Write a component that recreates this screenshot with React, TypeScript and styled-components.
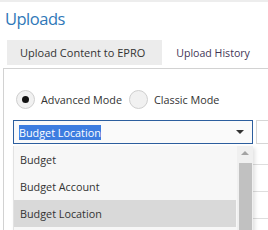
import styled, { createGlobalStyle } from 'styled-components'

const GlobalStyle = createGlobalStyle`
  html, body {
    margin: 0;
    padding: 0;
    background: #ffffff;
  }
  body {
    font-family: 'Open Sans', 'Noto Sans', sans-serif;
    color: #333333;
    overflow: hidden;
  }
`

const options = ['Budget', 'Budget Account', 'Budget Location']

const App: React.FC = () => {
  return (
    <Page>
      <GlobalStyle />
      <TopStrip />
      <Title>Uploads</Title>
      <Tabs>
        <Tab active>Upload Content to EPRO</Tab>
        <Tab visited>Upload History</Tab>
      </Tabs>
      <Panel>
        <Modes>
          <Mode>
            <Radio checked />
            <span>Advanced Mode</span>
          </Mode>
          <Mode>
            <Radio />
            <span>Classic Mode</span>
          </Mode>
        </Modes>
        <SelectRow>
          <SelectBox>
            <Selected>Budget Location</Selected>
            <Caret />
          </SelectBox>
          <SideBox />
          <Dropdown>
            <Options>
              {options.map((o) => (
                <Option key={o} active={o === 'Budget Location'}>
                  {o}
                </Option>
              ))}
            </Options>
            <Scrollbar>
              <ScrollUp />
              <Thumb />
            </Scrollbar>
          </Dropdown>
        </SelectRow>
        <BackRows>
          <BackRow />
          <BackRow />
          <BackRow />
        </BackRows>
      </Panel>
    </Page>
  )
}

const Page = styled.div`
  width: 268px;
  height: 230px;
  overflow: hidden;
`

const TopStrip = styled.div`
  height: 2px;
  background: #ededed;
`

const Title = styled.h1`
  margin: 0;
  padding: 6px 0 0 5px;
  height: 32px;
  box-sizing: border-box;
  font-size: 16.5px;
  line-height: 22px;
  letter-spacing: -0.5px;
  font-weight: 400;
  color: #2f78b8;
`

const Tabs = styled.div`
  display: flex;
  margin: 6px 0 0 7px;
  height: 25px;
`

const Tab = styled.div<{ active?: boolean; visited?: boolean }>`
  display: flex;
  align-items: center;
  padding: ${(p) => (p.active ? '0 17px 0 13px' : '0 14px')};
  font-size: ${(p) => (p.active ? '11px' : '10.6px')};
  background: ${(p) => (p.active ? '#ececec' : 'transparent')};
  color: ${(p) => (p.visited ? '#3f3555' : '#333333')};
  white-space: nowrap;
`

const Panel = styled.div`
  position: relative;
  margin: 3px 0 0 3px;
  border-top: 1px solid #d2d2d2;
  border-left: 1px solid #d2d2d2;
  padding: 20px 0 0 9px;
  height: 200px;
`

const Modes = styled.div`
  display: flex;
  align-items: center;
  height: 20px;
  gap: 7px;
  margin-left: 3px;
`

const Mode = styled.label`
  display: flex;
  align-items: center;
  gap: 6px;
  font-size: 10.8px;
  color: #333333;
  white-space: nowrap;
`

const Radio = styled.span<{ checked?: boolean }>`
  position: relative;
  width: 19px;
  height: 19px;
  box-sizing: border-box;
  border-radius: 50%;
  border: 1px solid #cfcfcf;
  background: #f1f1f1;

  &::after {
    content: '';
    display: ${(p) => (p.checked ? 'block' : 'none')};
    position: absolute;
    left: 5px;
    top: 5px;
    width: 7px;
    height: 7px;
    border-radius: 50%;
    background: #111111;
  }
`

const SelectRow = styled.div`
  position: relative;
  display: flex;
  margin-top: 11px;
  gap: 3px;
`

const SelectBox = styled.div`
  display: flex;
  align-items: center;
  justify-content: space-between;
  width: 240px;
  height: 24px;
  box-sizing: border-box;
  border: 1px solid #2c5e9e;
  background: #fafafa;
  padding: 0 8px 0 5px;
`

const Selected = styled.span`
  font-size: 10.8px;
  line-height: 15px;
  background: #3d7de0;
  color: #ffffff;
`

const Caret = styled.span`
  width: 0;
  height: 0;
  border-left: 4px solid transparent;
  border-right: 4px solid transparent;
  border-top: 4px solid #333333;
`

const SideBox = styled.div`
  flex: 1;
  height: 24px;
  box-sizing: border-box;
  border: 1px solid #d6d6d6;
  border-right: none;
`

const Dropdown = styled.div`
  position: absolute;
  left: 0;
  top: 26px;
  width: 240px;
  height: 90px;
  display: flex;
  background: #f7f7f7;
  border-left: 1px solid #e2e2e2;
  box-sizing: border-box;
  box-shadow: 2px 2px 4px rgba(0, 0, 0, 0.12);
  z-index: 2;
`

const Options = styled.div`
  flex: 1;
  display: flex;
  flex-direction: column;
`

const Option = styled.div<{ active?: boolean }>`
  height: 27px;
  display: flex;
  align-items: center;
  padding-left: 6px;
  font-size: 10.8px;
  color: #333333;
  background: ${(p) => (p.active ? '#d9d9d9' : 'transparent')};
`

const Scrollbar = styled.div`
  width: 16px;
  margin-left: 1px;
  display: flex;
  flex-direction: column;
  align-items: center;
  background: #f0f0f0;
`

const ScrollUp = styled.span`
  margin-top: 5px;
  width: 0;
  height: 0;
  border-left: 4px solid transparent;
  border-right: 4px solid transparent;
  border-bottom: 4px solid #a3a3a3;
`

const Thumb = styled.div`
  margin-top: 8px;
  width: 13px;
  flex: 1;
  background: #c1c1c1;
`

const BackRows = styled.div`
  display: flex;
  flex-direction: column;
  margin-top: -6px;
`

const BackRow = styled.div`
  height: 26px;
  border-bottom: 1px solid #dedede;
`

export default App
